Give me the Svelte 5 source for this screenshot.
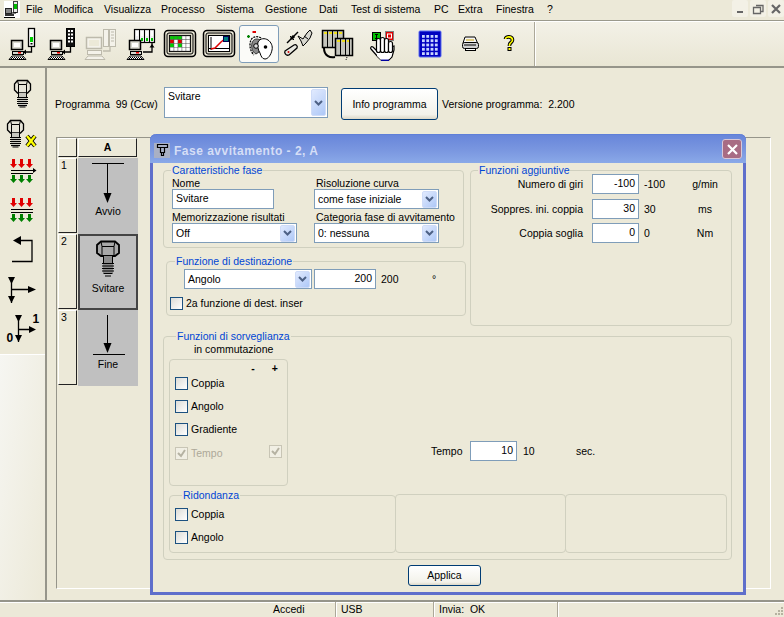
<script>
  const menu = ['File','Modifica','Visualizza','Processo','Sistema','Gestione','Dati','Test di sistema','PC','Extra','Finestra','?'];
  const aggiuntive = [['Numero di giri','-100','g/min'],['Soppres. ini. coppia','30','ms'],['Coppia soglia','0','Nm']];
  const table = ['g','g','g','w','w','r','w','r','w','w','g','w','g','w','w','w','w','w','w','w'];
  const tcolor = { g:'#00d000', r:'#e00000', w:'#ffffff' };
</script>

{#snippet chevron()}
  <svg width="9" height="6"><path d="M1 1l3.500 3.500L8 1" fill="none" stroke="#4d6185" stroke-width="2"/></svg>
{/snippet}

{#snippet bolt(x, y, fillHead, fillShank)}
  <g transform="translate({x} {y})" stroke="#000" fill="none">
    <path d="M3.500 .5h10l3 3.500v6l-3 3h-10l-3-3V4z" fill={fillHead} stroke-width="1.300"/>
    <path d="M3.500 .5l1 4h8l1-4M4.500 4.500V13M12.500 4.500V13"/>
    <path d="M4 13h9v14H4z" fill={fillShank} stroke="none"/>
    <path d="M4.500 13v4M12.500 13v4M3 17.500h11M3 19.500h11M3 21.500h11M3 23.500h11M4 25.500h9M5.500 27h6"/>
  </g>
{/snippet}

{#snippet pc(stroke, fill, key)}
  <g fill="none" stroke={stroke}>
    <rect x="6.500" y="13.500" width="11" height="9" fill={fill} stroke-width="1.500"/>
    <rect x="9" y="16" width="6" height="4" fill="#fff" stroke="none"/>
    <rect x="7.500" y="24.500" width="11" height="3" fill={fill}/>
    <path d="M4 32.500l3-3.500h11l3 3.500z" fill={key}/>
    <path d="M7 30.500h11M6 31.500h13" stroke-dasharray="1 1"/>
  </g>
{/snippet}

<div class="app">
  <div class="menubar">
    <svg class="appicon" width="16" height="17" viewBox="0 0 16 17"><rect width="16" height="17" fill="#fff"/><rect x="9.500" y=".5" width="4" height="11" fill="#e8e8e8" stroke="#444"/><rect x="10" y="3" width="3" height="5" fill="#0b0"/><rect x="1.500" y="7.500" width="6" height="5" fill="#888" stroke="#222"/><rect x="1" y="13" width="9" height="2" fill="#333"/><path d="M0 16.500h11" stroke="#000"/><path d="M8 12h4v-1" fill="none" stroke="#000"/></svg>
    <div class="menus">{#each menu as m}<span class="mi">{m}</span>{/each}</div>
    <div class="winbtns">
      <span class="wb"><svg width="14" height="14"><rect x="4" y="9" width="6" height="2" fill="#666"/></svg></span>
      <span class="wb"><svg width="14" height="14"><path d="M5 3.500h7v6h-2M2.500 5.500h7v6h-7z" fill="none" stroke="#666" stroke-width="1.300"/></svg></span>
      <span class="wb"><svg width="14" height="14"><path d="M3 3l8 8M11 3l-8 8" stroke="#666" stroke-width="2.200"/></svg></span>
    </div>
  </div>

  <div class="toolbar">
    <div class="tools">
      <span class="tool">
        <svg width="34" height="34" viewBox="0 0 34 34">
          <rect x="23.500" y="1.500" width="6" height="18" fill="#fff" stroke="#000" stroke-width="1.300"/><rect x="25" y="10" width="3" height="5" fill="#00d000"/><rect x="25.500" y="16" width="2" height="1.500" fill="#000"/>
          <path d="M26.500 20v5H20" fill="none" stroke="#000" stroke-width="1.300"/><path d="M18 25l3-2.500v5z" fill="#000"/>
          {@render pc('#000','#d8d8d0','#fff')}<rect x="13" y="25" width="3" height="1.500" fill="#e00"/>
        </svg>
      </span>
      <span class="tool">
        <svg width="34" height="34" viewBox="0 0 34 34">
          <rect x="22.500" y="1.500" width="8" height="18" fill="#111" stroke="#000"/>
          {#each [3,6.500,10,13.500] as y}<rect x="24" y={y} width="2" height="2" fill="#fff"/><rect x="27" y={y} width="2" height="2" fill="#fff"/>{/each}
          <path d="M26.500 20v5H20" fill="none" stroke="#000" stroke-width="1.300"/><path d="M18 25l3-2.500v5z" fill="#000"/>
          {@render pc('#000','#d8d8d0','#fff')}<rect x="13" y="25" width="3" height="1.500" fill="#e00"/>
        </svg>
      </span>
      <span class="tool">
        <svg width="36" height="34" viewBox="0 0 36 34">
          <rect x="3.500" y="10.500" width="15" height="11" fill="#f4f2ea" stroke="#bdbaac" stroke-width="1.500"/><rect x="6" y="13" width="10" height="6" fill="#ece9d8"/>
          <rect x="20.500" y="2.500" width="5" height="17" fill="#f4f2ea" stroke="#bdbaac"/><rect x="26.500" y="2.500" width="6" height="17" fill="#f4f2ea" stroke="#bdbaac"/>
          <path d="M28 5h3M28 8h3M28 11h3M28 14h3" stroke="#bdbaac"/>
          <path d="M27 20v4H20" fill="none" stroke="#bdbaac" stroke-width="1.300"/>
          <rect x="4.500" y="23.500" width="14" height="4" fill="#f4f2ea" stroke="#bdbaac"/>
          <path d="M2 32.500l3-3.500h14l3 3.500z" fill="#f4f2ea" stroke="#bdbaac"/>
        </svg>
      </span>
      <span class="tool">
        <svg width="34" height="34" viewBox="0 0 34 34">
          <rect x="11.500" y="2.500" width="20" height="13" fill="#eee" stroke="#000" stroke-width="1.200"/>
          <path d="M16.500 3v12M21.500 3v12M26.500 3v12" stroke="#000"/>
          <path d="M13 4h2v5h-2zM18 4h2v5h-2zM23 4h2v5h-2zM28 4h2v5h-2z" fill="#fff"/>
          <path d="M18 11h2v3h-2zM23 11h2v3h-2zM28 11h2v3h-2z" fill="#00c000"/>
          <path d="M29 15v10H20" fill="none" stroke="#000" stroke-width="1.300"/><path d="M29 17l-2.500 3.500h5z" fill="#000"/>
          {@render pc('#000','#d8d8d0','#fff')}<rect x="13" y="25" width="3" height="1.500" fill="#e00"/>
        </svg>
      </span>
      <span class="tool">
        <svg width="34" height="34" viewBox="0 0 34 34">
          <rect x="1.500" y="3.500" width="31" height="26" rx="3.500" fill="#ece9d8" stroke="#000" stroke-width="1.500"/>
          <rect x="4" y="6" width="26" height="21" rx="2" fill="#d8d5c4" stroke="#000"/>
          <rect x="6.500" y="8.500" width="21" height="16" fill="#fff" stroke="#000"/>
          {#each table as c, i}<rect x={7+(i%5)*4} y={9+Math.floor(i/5)*3.750} width="4" height="3.750" fill={tcolor[c]} stroke="#555" stroke-width=".4"/>{/each}
        </svg>
      </span>
      <span class="tool">
        <svg width="34" height="34" viewBox="0 0 34 34">
          <rect x="1.500" y="3.500" width="31" height="26" rx="3.500" fill="#ece9d8" stroke="#000" stroke-width="1.500"/>
          <rect x="4" y="6" width="26" height="21" rx="2" fill="#d8d5c4" stroke="#000"/>
          <rect x="6.500" y="8.500" width="21" height="16" fill="#fff" stroke="#000"/>
          <path d="M9 10v13M7 21.500h20" stroke="#000"/>
          <path d="M9 22l4-1 6-6 5-4" fill="none" stroke="#e00000" stroke-width="1.500"/>
          <rect x="21.500" y="9.500" width="5" height="5" fill="#008080" stroke="#005"/>
        </svg>
      </span>
      <span class="tool sel">
        <svg width="34" height="34" viewBox="0 0 34 34">
          <path d="M5 9.500h3M6.500 8v3" stroke="#008000" stroke-width="1.300"/><rect x="10.500" y="4" width="3.500" height="2" fill="#e00000"/>
          <path d="M19 11c-3-2-8-2-10 2-2 5-1 11 3 15" fill="none" stroke="#000" stroke-dasharray="2 1" stroke-width="1.300"/>
          <path d="M18 13c-3-2-7-1-8 3s0 9 4 11l3-2z" fill="#8a8a8a" stroke="#333"/>
          <path d="M16 15c2-4 7-4 10-2 3 2 5 6 4 10-1 5-4 9-7 9-3 0-4-3-5-6-2-3-3-8-2-11z" fill="#fff" stroke="#000"/>
          <circle cx="23.500" cy="20" r="1.800" fill="#000"/>
          <circle cx="14" cy="19" r="2.300" fill="#ddd" stroke="#000"/>
        </svg>
      </span>
      <span class="tool">
        <svg width="34" height="34" viewBox="0 0 34 34">
          <path d="M6 16L17 5" stroke="#000" stroke-width="1.500"/><path d="M10 12l3-3" stroke="#000" stroke-width="3"/><path d="M9 9l4 4" stroke="#000"/>
          <path d="M17 9l5 3 4-6 3-3 2 3-2 5-4 5-3 3-2-5z" fill="#d8d8d0" stroke="#000"/><path d="M23 9l4 3" stroke="#000"/>
          <path d="M4 24l9-6c2-1 4 1 3 3l-8 7c-3 1-5-2-4-4z" fill="#e8e8e0" stroke="#000" stroke-width="1.300"/>
          <circle cx="7.500" cy="25" r="1" fill="#d00000"/>
        </svg>
      </span>
      <span class="tool">
        <svg width="34" height="34" viewBox="0 0 34 34">
          <rect x="1.500" y="3.500" width="21" height="17" fill="#c4c4bc" stroke="#000" stroke-width="1.500"/>
          <path d="M6.500 4v16M11.500 4v16M16.500 4v16" stroke="#000"/>
          <path d="M3 5h3v2H3zM8 5h3v2H8zM13 5h3v2h-3zM18 5h3v2h-3z" fill="#f0e020"/>
          <path d="M3 21c0 8 6 10 11 9" fill="none" stroke="#000" stroke-width="2"/>
          <rect x="14.500" y="11.500" width="17" height="17" fill="#c4c4bc" stroke="#000" stroke-width="1.500"/>
          <path d="M19.500 12v16M24.500 12v16M28.500 12v16" stroke="#000"/>
          <path d="M16 13h3v2h-3zM21 13h3v2h-3zM26 13h2v2h-2z" fill="#f0e020"/>
          <path d="M26 30l-1 3" stroke="#000" stroke-dasharray="1 1"/>
        </svg>
      </span>
      <span class="tool hand">
        <svg width="34" height="34" viewBox="0 0 34 34">
          <rect x="6.500" y="5.500" width="8" height="8" fill="#00c000" stroke="#000"/><path d="M9 7.500h3M10.500 7.500v4M9 11.500h3" stroke="#000"/>
          <rect x="19.500" y="4.500" width="8" height="9" fill="#e00000" stroke="#808080"/><rect x="21.500" y="7" width="4" height="4" fill="none" stroke="#fff"/>
          <g fill="#fff" stroke="#000" stroke-width="1.200">
            <path d="M11 24l-4-4c-2-1-3 1-2 2l7 8 3 3h8l3-3 2-7v-4z"/>
            <rect x="10.500" y="11.500" width="4" height="14" rx="2"/>
            <rect x="14.500" y="10.500" width="4" height="15" rx="2"/>
            <rect x="18.500" y="11.500" width="4" height="14" rx="2"/>
            <rect x="22.500" y="14.500" width="4" height="11" rx="2"/>
          </g>
          <path d="M11 26h15l-1 4-3 3h-7l-4-4z" fill="#fff"/>
          <path d="M15 33.300h8" stroke="#0000a0" stroke-width="1.500"/>
        </svg>
      </span>
      <span class="tool calc">
        <svg width="34" height="34" viewBox="0 0 34 34">
          <rect x="6" y="4" width="22" height="26" rx="1" fill="#0000c0" stroke="#5a6cf0"/>
          {#each [0,1,2,3,4] as r}{#each [0,1,2,3] as c}<rect x={9+c*4.300} y={8+r*4.300} width="2.800" height="2.800" fill="#c8d4ff"/>{/each}{/each}
        </svg>
      </span>
      <span class="tool">
        <svg width="34" height="34" viewBox="0 0 34 34">
          <path d="M12 10h10l2.500 6H10z" fill="#f4f4f4" stroke="#000"/>
          <rect x="9.500" y="15.500" width="16" height="6" rx="2" fill="#d0d0d0" stroke="#000"/>
          <rect x="12.500" y="21.500" width="10" height="2" fill="#fff" stroke="#000"/>
          <path d="M13 13h8" stroke="#c8a000"/><path d="M11 18h12" stroke="#000"/>
        </svg>
      </span>
      <span class="tool">
        <svg width="34" height="34" viewBox="0 0 34 34">
          <path d="M13.500 12c0-3 7-3 7 1 0 2.500-3 2.500-3 5v1" fill="none" stroke="#000" stroke-width="3.600"/>
          <path d="M13.500 12c0-3 7-3 7 1 0 2.500-3 2.500-3 5v1" fill="none" stroke="#ffff00" stroke-width="1.600"/>
          <rect x="16" y="20.500" width="3" height="3" fill="#ffff00" stroke="#000"/>
        </svg>
      </span>
    </div>
    <div class="tbsep"></div>
  </div>

  <div class="body">
    <div class="side">
      <div class="sidetools">
        <svg width="40" height="39" viewBox="0 0 40 39">{@render bolt(14, 4, '#e6e4d8', '#c8c8c0')}</svg>
        <svg width="40" height="39" viewBox="0 0 40 39">{@render bolt(7, 5, '#e6e4d8', '#c8c8c0')}<path d="M27 21l8 10M35 21l-8 10" stroke="#000" stroke-width="4.200"/><path d="M27 21l8 10M35 21l-8 10" stroke="#ffff00" stroke-width="2.400"/></svg>
        {#each [0,1] as i}
          <svg width="40" height="39" viewBox="0 0 40 39">
            {#each [13.500,21.500,29.500] as x}
              <path d="M{x-1.500} 5h3v5h2l-3.500 4-3.500-4h2z" fill="#e00000"/>
              <path d="M{x-1.500} 21h3v4h2l-3.500 4-3.500-4h2z" fill="#008000"/>
            {/each}
            <path d="M11 16.500h22M11 19.500h22" stroke="#000"/>
            {#if i===0}<path d="M33 14l3.500 2.500L33 19z" fill="#000"/>{/if}
          </svg>
        {/each}
        <svg width="40" height="39" viewBox="0 0 40 39"><path d="M20 8.500h12v21H12" fill="none" stroke="#000" stroke-width="1.300"/><path d="M13 8.500l8-4.500v9z" fill="#000"/></svg>
        <svg width="40" height="39" viewBox="0 0 40 39"><path d="M11.500 8v24M11.500 18.500h18" stroke="#000" stroke-width="1.300"/><path d="M8 6h7l-3.500 7zM8 25h7l-3.500 7zM28 15l8 3.500-8 3.500z" fill="#000"/></svg>
        <svg width="40" height="39" viewBox="0 0 40 39"><path d="M18.500 6v26M18.500 19.500h12" stroke="#000" stroke-width="1.300"/><path d="M15 5h7l-3.500 7zM15 25h7l-3.500 7zM29 16l7 3.500-7 3.500z" fill="#000"/><text x="32.500" y="13" class="bit">1</text><text x="6.500" y="32" class="bit">0</text></svg>
      </div>
      <div class="sidebottom"></div>
    </div>

    <div class="work">
      <div class="proghead">
        <span class="plabel">Programma&nbsp; 99 (Ccw)</span>
        <div class="bigselect"><span>Svitare</span><span class="arrow tall">{@render chevron()}</span></div>
        <button class="xp info">Info programma</button>
        <span class="ver">Versione programma:&nbsp; 2.200</span>
      </div>

      <div class="grid-outer">
        <div class="grid">
          <div class="corner"></div><div class="colh">A</div>
          {#each ['1','2','3'] as n, i}
            <div class="rowh">{n}</div>
            <div class="cell" class:active={i===1} class:c0={i===0} class:c2={i===2}>
              {#if i===0}
                <svg width="34" height="41" viewBox="0 0 34 41"><path d="M1 .5h32M16.500 0v34" stroke="#000"/><path d="M12.500 30h8l-4 10z" fill="#000"/></svg>
                <span>Avvio</span>
              {:else if i===1}
                <svg width="26" height="38" viewBox="0 0 26 38">
                  <path d="M6 1.500h14l4 3.500v8l-4 3H6l-4-3V5z" fill="#a8a8a8" stroke="#000" stroke-width="1.800"/>
                  <path d="M6 1.500l1 5h12l1-5M7 6.500V16M19 6.500V16" fill="none" stroke="#000"/>
                  <path d="M8 16h10v17H8z" fill="#8c8c8c"/><path d="M8.500 16v7M17.500 16v7" stroke="#000"/>
                  <path d="M7 23.500h12M7 26h12M7 28.500h12M7 31h12M8.500 33.500h9M10 36h6" stroke="#000" stroke-width="1.200"/>
                </svg>
                <span>Svitare</span>
              {:else}
                <svg width="34" height="40" viewBox="0 0 34 40"><path d="M16.500 0v34M2 39.500h32" stroke="#000"/><path d="M12.500 28h8l-4 10z" fill="#000"/></svg>
                <span>Fine</span>
              {/if}
            </div>
          {/each}
        </div>
      </div>

      <div class="dialog">
        <div class="titlebar">
          <span class="ticon"><svg width="13" height="14" viewBox="0 0 13 14"><path d="M1.500 1.500h10v3h-10zM4.500 4.500h4v5h-4zM5.500 9.500h2v3h-2z" fill="none" stroke="#000" stroke-width="1.200"/></svg></span>
          <span class="ttext">Fase avvitamento - 2, A</span>
          <span class="tclose"><svg width="13" height="13"><path d="M2 2l9 9M11 2l-9 9" stroke="#fff" stroke-width="2.200"/></svg></span>
        </div>
        <div class="dbody">
          <div class="toprow">
            <div class="topleft">
              <fieldset class="fs car">
                <legend>Caratteristiche fase</legend>
                <div class="cargrid">
                  <div class="fld"><span class="lab">Nome</span><div class="input nome">Svitare</div></div>
                  <div class="fld r"><span class="lab">Risoluzione curva</span><div class="select w125"><span>come fase iniziale</span><span class="arrow">{@render chevron()}</span></div></div>
                  <div class="fld"><span class="lab">Memorizzazione risultati</span><div class="select w125"><span>Off</span><span class="arrow">{@render chevron()}</span></div></div>
                  <div class="fld r"><span class="lab">Categoria fase di avvitamento</span><div class="select w125"><span>0: nessuna</span><span class="arrow">{@render chevron()}</span></div></div>
                </div>
              </fieldset>
              <fieldset class="fs dest">
                <legend>Funzione di destinazione</legend>
                <div class="destrow">
                  <div class="select w128"><span>Angolo</span><span class="arrow">{@render chevron()}</span></div>
                  <div class="input num w62">200</div>
                  <span class="val v200">200</span>
                  <span class="deg">°</span>
                </div>
                <div class="chkrow dchk"><span class="cb"></span><span>2a funzione di dest. inser</span></div>
              </fieldset>
            </div>
            <fieldset class="fs agg">
              <legend>Funzioni aggiuntive</legend>
              {#each aggiuntive as r}
                <div class="aggrow"><span class="al">{r[0]}</span><div class="input num w47">{r[1]}</div><span class="val av">{r[1]}</span><span class="unit">{r[2]}</span></div>
              {/each}
            </fieldset>
          </div>

          <fieldset class="fs sorv">
            <legend>Funzioni di sorveglianza</legend>
            <div class="commlabel">in commutazione</div>
            <div class="sorvrow">
              <div class="box comm">
                <div class="pm"><span>-</span><span>+</span></div>
                <div class="chkrow"><span class="cb"></span><span>Coppia</span></div>
                <div class="chkrow"><span class="cb"></span><span>Angolo</span></div>
                <div class="chkrow"><span class="cb"></span><span>Gradiente</span></div>
                <div class="chkrow dis"><span class="cb on"><svg width="9" height="9"><path d="M1 4l3 3 4-6" fill="none" stroke="#b5b2a2" stroke-width="2"/></svg></span><span>Tempo</span><span class="cb on right"><svg width="9" height="9"><path d="M1 4l3 3 4-6" fill="none" stroke="#b5b2a2" stroke-width="2"/></svg></span></div>
              </div>
              <div class="tempo"><span class="tl">Tempo</span><div class="input num w47">10</div><span class="val tv">10</span><span class="sec">sec.</span></div>
            </div>
            <div class="ridrow">
              <fieldset class="fs rid">
                <legend>Ridondanza</legend>
                <div class="chkrow"><span class="cb"></span><span>Coppia</span></div>
                <div class="chkrow"><span class="cb"></span><span>Angolo</span></div>
              </fieldset>
              <div class="box rb1"></div>
              <div class="box rb2"></div>
            </div>
          </fieldset>

          <div class="foot"><button class="xp applica">Applica</button></div>
        </div>
      </div>
    </div>
  </div>

  <div class="status">
    <span class="st s1">Accedi</span><span class="st s2">USB</span><span class="st s3">Invia:&nbsp; OK</span><span class="st s4"></span>
    <svg class="grip" width="12" height="12"><path d="M9 2h2v2H9zM6 5h2v2H6zM9 5h2v2H9zM3 8h2v2H3zM6 8h2v2H6zM9 8h2v2H9z" fill="#b5b2a0"/></svg>
  </div>
</div>

<style>
  :global(body) { margin: 0; background: #ece9d8; }
  .app { width: 784px; height: 617px; overflow: hidden; display: flex; flex-direction: column; background: #ece9d8; font: 10.500px/13px "Liberation Sans", sans-serif; color: #000; }
  .menubar { height: 21px; display: flex; align-items: center; position: relative; border-bottom: 1px solid #9a998c; box-sizing: border-box; flex: none; padding-bottom: 2px; }
  .appicon { margin: 1px 6px 0 4px; flex: none; }
  .menus { display: grid; grid-template-columns: 28px 50px 57px 55px 49px 54px 32px 83px 24px 38px 51px 10px; }
  .mi { white-space: nowrap; }
  .winbtns { position: absolute; right: 0; top: 0; display: flex; gap: 2px; }
  .wb { width: 16px; height: 17px; display: flex; align-items: center; justify-content: center; border-radius: 2px; background: #f3f1e6; }
  .toolbar { height: 47px; flex: none; display: flex; align-items: center; background: linear-gradient(#f3f1e7,#e9e6d4); border-top: 1px solid #fff; border-bottom: 2px solid #96958a; position: relative; box-sizing: border-box; }
  .tools { display: flex; padding-left: 2px; }
  .tool { width: 39.500px; height: 38px; display: flex; align-items: center; justify-content: center; box-sizing: border-box; flex: none; }
  .tool.sel { background: #fbfbf8; border: 1px solid #7f9db9; border-radius: 3px; }
  .tool.hand { margin-left: 5.500px; }
  .tool.calc { margin-left: 8px; }
  .tbsep { position: absolute; left: 534px; top: 0; bottom: 0; border-left: 1px solid #aca899; border-right: 1px solid #fff; }
  .body { flex: 1; display: flex; min-height: 0; }
  .side { width: 47px; flex: none; display: flex; flex-direction: column; border-right: 2px solid #96958a; box-sizing: border-box; }
  .sidetools { height: 286px; display: flex; flex-direction: column; padding-top: 8px; box-sizing: border-box; flex: none; overflow: hidden; }
  .sidetools svg { display: block; flex: none; }
  .bit { font: bold 12px "Liberation Sans", sans-serif; }
  .sidebottom { flex: 1; background: linear-gradient(100deg,#f6f6f2,#ece9d8); border-top: 1px solid #fff; }
  .work { flex: 1; position: relative; min-width: 0; }
  .proghead { position: absolute; left: 8px; top: 19px; display: flex; align-items: flex-start; }
  .plabel { width: 109px; margin-top: 11px; white-space: nowrap; }
  .bigselect { width: 164px; height: 31px; background: #fff; border: 1px solid #7f9db9; box-sizing: border-box; padding: 2px 3px; position: relative; }
  .arrow { width: 15px; height: 17px; background: linear-gradient(135deg,#e1eafe,#aec8f7); border-radius: 2px; display: flex; align-items: center; justify-content: center; border: 1px solid #cfdcf8; box-sizing: border-box; flex: none; }
  .arrow.tall { position: absolute; right: 1px; top: 1px; bottom: 1px; height: auto; }
  .xp { background: linear-gradient(#fff,#f3f2ea 85%,#dcd8c8); border: 1px solid #003c74; border-radius: 3px; font: inherit; padding: 0; color: #000; }
  .info { width: 97px; height: 32px; margin: 1px 0 0 13px; }
  .ver { margin-left: 4px; margin-top: 11px; white-space: nowrap; }
  .grid-outer { position: absolute; left: 9px; top: 69px; width: 715px; height: 452px; border: 1px solid; border-color: #96958a #fff #fff #96958a; box-sizing: border-box; padding-left: 1px; }
  .grid { display: grid; grid-template-columns: 20px 60px; grid-template-rows: 20px 76px 76px 76px; width: 80px; }
  .corner, .colh, .rowh { border: 1px solid; border-color: #fff #222 #222 #fff; box-sizing: border-box; background: #ece9d8; margin: 0 1px 1px 0; }
  .colh { text-align: center; font-weight: bold; line-height: 17px; }
  .rowh { padding: 0 2px; }
  .cell { background: #c0c0c0; display: flex; flex-direction: column; align-items: center; box-sizing: border-box; }
  .cell.c0 { padding-top: 5px; gap: 1px; }
  .cell.c2 { padding-top: 5px; gap: 3px; }
  .cell.active { border: 2px solid #444; padding-top: 4px; gap: 4px; }
  .dialog { position: absolute; left: 103px; top: 66px; width: 596px; height: 461px; box-sizing: border-box; border: 3px solid #5f6fcb; border-top: none; border-radius: 6px 6px 0 0; background: #ece9d8; display: flex; flex-direction: column; }
  .titlebar { height: 29px; margin: 0 -3px; padding: 0 4px 0 4px; flex: none; display: flex; align-items: center; box-sizing: border-box; background: linear-gradient(#6886da,#7a97e0 55%,#8aa9e8); border-top: 1px solid #5f7fd8; border-radius: 6px 6px 0 0; }
  .ticon { width: 16px; height: 15px; margin-top: 2px; background: #a9b0c4; display: flex; align-items: center; justify-content: center; }
  .ttext { color: #d5def6; font: bold 12px "Liberation Sans", sans-serif; letter-spacing: .5px; margin: 3px 0 0 4px; flex: 1; white-space: nowrap; }
  .tclose { width: 20px; height: 20px; background: #a86c84; border: 1px solid #d8c8d8; border-radius: 3px; display: flex; align-items: center; justify-content: center; box-sizing: border-box; }
  .dbody { flex: 1; min-height: 0; padding: 1px 0 0 10px; display: flex; flex-direction: column; }
  .fs { border: 1px solid #d0d0bf; border-radius: 4px; margin: 0; padding: 0; box-sizing: border-box; min-width: 0; }
  legend { color: #0046d5; line-height: 12px; padding: 0 1px; margin-left: 7px; white-space: nowrap; }
  .toprow { display: flex; gap: 4px; height: 162px; flex: none; }
  .topleft { width: 303px; display: flex; flex-direction: column; flex: none; }
  .car { width: 301px; height: 84px; flex: none; }
  .cargrid { display: grid; grid-template-columns: 142px 125px; padding: 1px 0 0 8px; }
  .fld { display: flex; flex-direction: column; height: 34px; }
  .fld.r .lab { margin-left: 2px; }
  .lab { line-height: 12px; height: 12px; white-space: nowrap; }
  .input { background: #fff; border: 1px solid #7f9db9; box-sizing: border-box; height: 20px; line-height: 17px; padding: 0 3px; }
  .nome { width: 102px; }
  .select { display: flex; align-items: center; justify-content: space-between; background: #fff; border: 1px solid #7f9db9; box-sizing: border-box; height: 20px; padding: 0 1px 0 3px; }
  .w125 { width: 125px; }
  .dest { width: 300px; height: 61px; margin: 7px 0 0 3px; flex: none; }
  .dest legend { margin-left: 8px; }
  .destrow { display: flex; align-items: center; padding-left: 17px; margin-top: 2px; height: 20px; }
  .w128 { width: 128px; flex: none; }
  .w62 { width: 62px; margin-left: 2px; flex: none; }
  .num { text-align: right; }
  .val { margin-left: 5px; }
  .v200 { width: 46px; }
  .deg { margin-left: 5px; }
  .chkrow { display: flex; align-items: center; gap: 3px; height: 23px; white-space: nowrap; }
  .cb { width: 13px; height: 13px; border: 1px solid #1c5180; box-sizing: border-box; background: linear-gradient(135deg,#dcdcd7,#fff); display: inline-flex; align-items: center; justify-content: center; flex: none; }
  .dchk { padding-left: 3px; margin-top: 8px; height: 13px; }
  .agg { width: 262px; height: 162px; flex: none; }
  .aggrow { display: flex; align-items: center; height: 20px; }
  .aggrow:nth-of-type(1) { margin-top: -2px; }
  .aggrow:nth-of-type(2) { margin-top: 5px; }
  .aggrow:nth-of-type(3) { margin-top: 4px; }
  .al { width: 112px; text-align: right; white-space: nowrap; }
  .w47 { width: 47px; margin-left: 9px; flex: none; }
  .av { width: 44px; margin-left: 5px; }
  .unit { width: 34px; text-align: center; }
  .sorv { width: 569px; height: 230px; margin-top: 4px; padding: 0 5px; flex: none; }
  .commlabel { padding: 1px 0 0 25px; line-height: 13px; height: 17px; box-sizing: border-box; }
  .sorvrow { display: flex; height: 127px; }
  .box { border: 1px solid #d0d0bf; border-radius: 4px; box-sizing: border-box; flex: none; }
  .comm { width: 119px; height: 127px; padding: 2px 5px 0; }
  .pm { display: flex; justify-content: flex-end; gap: 17px; padding-right: 4px; height: 13px; margin-bottom: -3px; font-weight: bold; }
  .dis { color: #aca899; position: relative; margin-top: 1px; }
  .cb.on { border-color: #c8c5b5; background: #f1efe4; }
  .right { position: absolute; right: 0; top: 3px; }
  .tempo { display: flex; align-items: center; height: 20px; margin: 82px 0 0 143px; }
  .tl { width: 39px; }
  .tempo .w47 { margin-left: 0; }
  .tv { width: 47px; margin-left: 6px; }
  .sec { margin-left: 6px; }
  .ridrow { display: flex; margin-top: 3px; height: 64px; align-items: flex-end; }
  .rid { width: 227px; height: 64px; padding: 2px 5px 0; flex: none; }
  .rb1 { width: 171px; height: 59px; margin-left: -1px; }
  .rb2 { width: 162px; height: 59px; margin-left: -1px; }
  .foot { margin: 5px 0 0 245px; }
  .applica { width: 73px; height: 21px; display: block; }
  .status { height: 17px; flex: none; border-top: 2px solid #96958a; box-shadow: inset 0 1px 0 #fff; display: flex; position: relative; box-sizing: border-box; }
  .st { height: 100%; box-sizing: border-box; padding-left: 5px; border-left: 1px solid #aca899; box-shadow: inset 1px 0 0 #fff; line-height: 15px; white-space: nowrap; }
  .s1 { width: 335px; border-left: none; box-shadow: none; padding-left: 273px; }
  .s2 { width: 98px; }
  .s3 { width: 124px; }
  .s4 { width: 208px; }
  .grip { position: absolute; right: 0; bottom: 0; }
</style>
